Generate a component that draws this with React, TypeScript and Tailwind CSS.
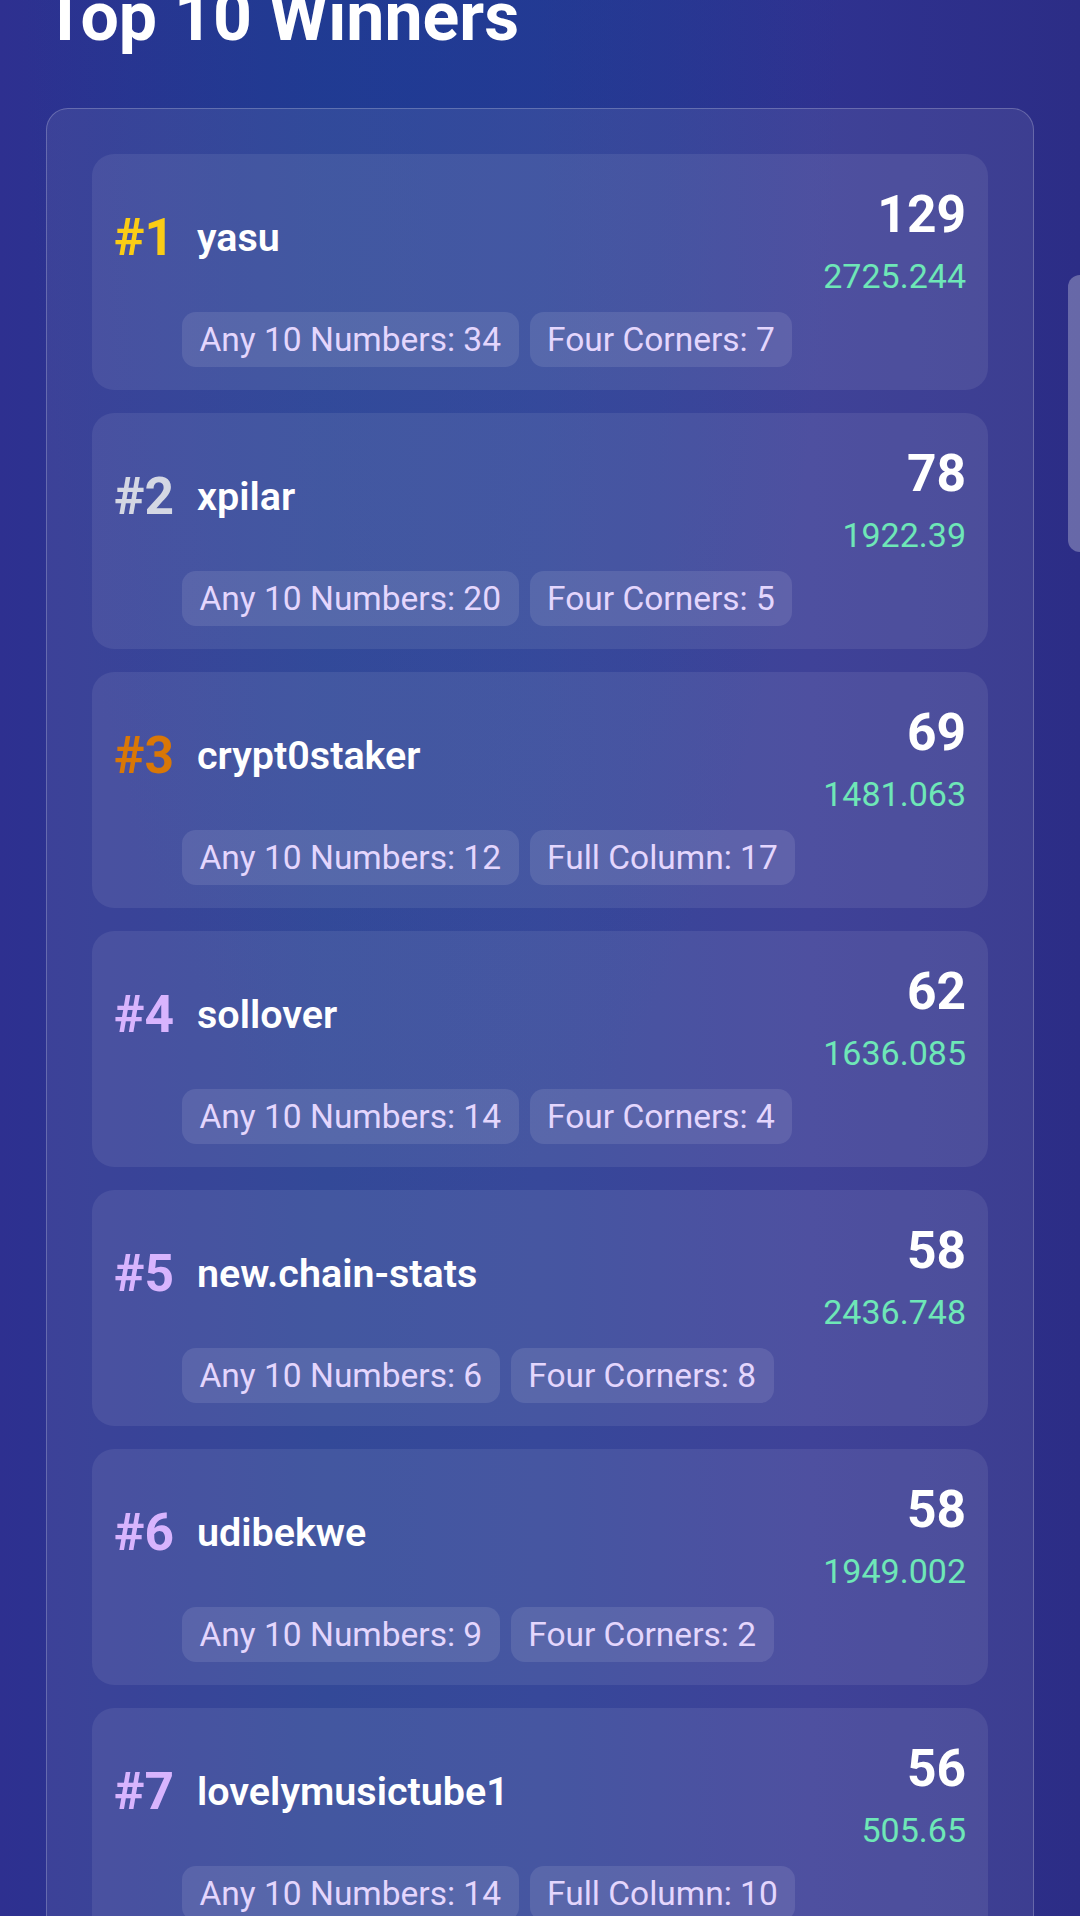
import React from "react";

type Winner = {
  rank: number;
  name: string;
  wins: number;
  amount: string;
  tags: string[];
};

const winners: Winner[] = [
  { rank: 1, name: "yasu", wins: 129, amount: "2725.244", tags: ["Any 10 Numbers: 34", "Four Corners: 7"] },
  { rank: 2, name: "xpilar", wins: 78, amount: "1922.39", tags: ["Any 10 Numbers: 20", "Four Corners: 5"] },
  { rank: 3, name: "crypt0staker", wins: 69, amount: "1481.063", tags: ["Any 10 Numbers: 12", "Full Column: 17"] },
  { rank: 4, name: "sollover", wins: 62, amount: "1636.085", tags: ["Any 10 Numbers: 14", "Four Corners: 4"] },
  { rank: 5, name: "new.chain-stats", wins: 58, amount: "2436.748", tags: ["Any 10 Numbers: 6", "Four Corners: 8"] },
  { rank: 6, name: "udibekwe", wins: 58, amount: "1949.002", tags: ["Any 10 Numbers: 9", "Four Corners: 2"] },
  { rank: 7, name: "lovelymusictube1", wins: 56, amount: "505.65", tags: ["Any 10 Numbers: 14", "Full Column: 10"] },
];

function rankColor(rank: number) {
  if (rank === 1) return "text-[#facc15]";
  if (rank === 2) return "text-[#d4d7e3]";
  if (rank === 3) return "text-[#d97706]";
  return "text-[#d8b4fe]";
}

function WinnerCard({ w }: { w: Winner }) {
  return (
    <div className="rounded-[22px] bg-white/[0.08] pt-[22px] pb-[23px] px-[22px]">
      <div className="flex items-center justify-between">
        <div className="flex items-center">
          <span className={`w-[83px] text-[51.5px] leading-none font-bold ${rankColor(w.rank)}`}>
            #{w.rank}
          </span>
          <span className="text-[39.5px] leading-none font-semibold text-white">{w.name}</span>
        </div>
        <div className="flex flex-col items-end">
          <span className="text-[51.5px] leading-[77px] font-bold text-white">{w.wins}</span>
          <span className="text-[34px] leading-[47px] text-[#6ee7b7]">{w.amount}</span>
        </div>
      </div>
      <div className="mt-[12px] ml-[68px] flex gap-[11px]">
        {w.tags.map((t) => (
          <span
            key={t}
            className="h-[55px] rounded-[14px] bg-white/[0.1] px-[17.5px] text-[33.5px] leading-[55px] text-[#e4d6fd]"
          >
            {t}
          </span>
        ))}
      </div>
    </div>
  );
}

export default function App() {
  return (
    <div
      className="relative h-[1916px] w-[1080px] overflow-hidden bg-[linear-gradient(90deg,#2e3090_0%,#223a90_30%,#263992_50%,#2f3290_75%,#2c2d86_100%)]"
      style={{ fontFamily: "Roboto, 'Noto Sans', sans-serif" }}
    >
      <div className="pointer-events-none absolute inset-0 bg-[radial-gradient(ellipse_at_40%_0%,rgba(30,60,150,0.55),transparent_45%)]" />
      <div className="relative">
        <h1 className="mt-[-27px] pl-[44px] text-[68px] leading-[88px] font-bold text-white">Top 10 Winners</h1>
        <div className="mx-[46px] mt-[47px] rounded-[22px] border border-white/[0.22] bg-white/[0.08] p-[45px]">
          <div className="flex flex-col gap-[23px]">
            {winners.map((w) => (
              <WinnerCard key={w.rank} w={w} />
            ))}
          </div>
        </div>
      </div>
      <div className="absolute left-[1068px] top-[275px] h-[277px] w-[30px] rounded-[12px] bg-white/[0.28]" />
    </div>
  );
}
